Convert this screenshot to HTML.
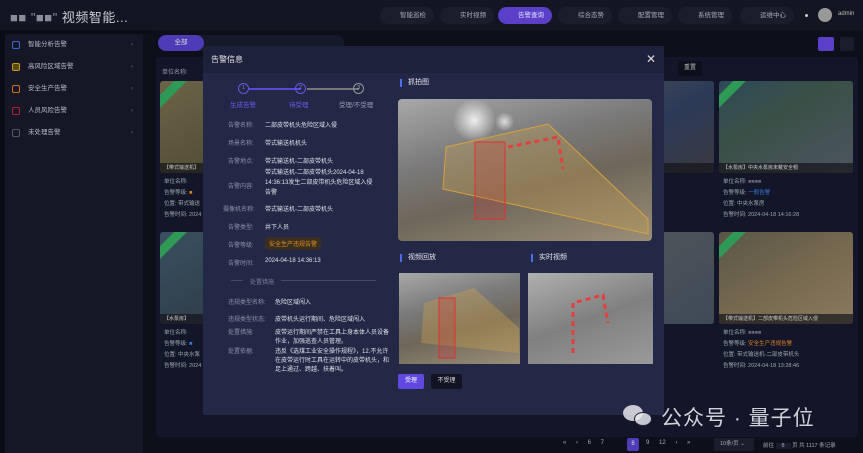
<!DOCTYPE html>
<html><head><meta charset="utf-8"><style>
*{margin:0;padding:0;box-sizing:border-box}
body{width:863px;height:453px;overflow:hidden;background:#0b0d16;font-family:"Liberation Sans","Noto Sans CJK SC",sans-serif;color:#c8cbd8;position:relative;font-size:7px}
.abs{position:absolute}
.top{left:0;top:0;width:863px;height:30px;background:#131522}
.title{left:10px;top:7px;font-size:13px;color:#c9cbd6;letter-spacing:0.5px}
.nav{top:7px;height:17px;border-radius:9px;background:#1a1d2c;font-size:6.5px;color:#aab;line-height:17px;padding-left:20px}
.nav.act{background:#5a3fc8;color:#e6e0ff}
.side{left:5px;top:34px;width:140px;height:419px;background:#151726}
.mi{left:12px;width:125px;height:16px;font-size:6.5px;color:#b8bbc8;line-height:16px;padding-left:16px}
.mi i{position:absolute;left:0;top:4px;width:8px;height:8px;border:1px solid;border-radius:2px}
.mi b{position:absolute;right:4px;top:0;font-weight:normal;color:#667}
.card{width:134px;height:160px}
.img{width:134px;height:92px;border-radius:3px;overflow:hidden;position:relative}
.cap{position:absolute;left:0;bottom:0;width:100%;height:10px;background:rgba(20,20,25,.7);font-size:5px;color:#ccc;line-height:10px;padding-left:4px}
.tag{position:absolute;left:-12px;top:6px;width:44px;height:9px;background:#2e9a55;transform:rotate(-45deg)}
.ln{font-size:5.5px;color:#9aa;height:11px;padding-left:4px}
.modal{left:203px;top:46px;width:461px;height:369px;background:#232847;border-radius:2px}
.mh{left:0;top:0;width:461px;height:27px;background:#1d2139;font-size:8px;color:#e8e8f0;line-height:27px;padding-left:8px}
.row{left:25px;font-size:6px;color:#8d91a8;width:160px}
.row span{color:#e0e2ec;position:absolute;left:37px}
.sec{font-size:7px;color:#e6e6f0;padding-left:6px;border-left:2px solid #4a6cf0;line-height:8px}
.cam{background:linear-gradient(165deg,#a8a8a8 0%,#7a7a7a 35%,#6e675a 60%,#9a8e76 100%);border-radius:4px;overflow:hidden}
.btn{height:15px;font-size:6px;line-height:15px;text-align:center;border-radius:2px}
</style></head><body>
<div class="abs top"></div>
<div class="abs title"><span style="color:#8a8c99">■■ "■■"</span> 视频智能...</div>
<div class="abs nav" style="left:380px;width:54px">智能巡检</div>
<div class="abs nav" style="left:440px;width:54px">实时视频</div>
<div class="abs nav act" style="left:498px;width:54px">告警查询</div>
<div class="abs nav" style="left:558px;width:54px">综合态势</div>
<div class="abs nav" style="left:618px;width:54px">配置管理</div>
<div class="abs nav" style="left:678px;width:54px">系统管理</div>
<div class="abs nav" style="left:740px;width:54px">运维中心</div>
<div class="abs" style="left:805px;top:14px;width:3px;height:3px;border-radius:50%;background:#ccc"></div>
<div class="abs" style="left:818px;top:8px;width:14px;height:14px;border-radius:50%;background:#999"></div>
<div class="abs" style="left:838px;top:11px;font-size:6px;color:#bbb">admin</div>

<div class="abs side"></div>
<div class="abs mi" style="top:37px;"><i style="border-color:#3a6ad0"></i>智能分析告警<b>›</b></div>
<div class="abs mi" style="top:59px;"><i style="border-color:#c9a21c;background:#5a4a10"></i>高风险区域告警<b>›</b></div>
<div class="abs mi" style="top:81px;"><i style="border-color:#d0701c"></i>安全生产告警<b>›</b></div>
<div class="abs mi" style="top:103px;"><i style="border-color:#b02030"></i>人员风险告警<b>›</b></div>
<div class="abs mi" style="top:125px;"><i style="border-color:#556"></i>未处理告警<b>›</b></div>
<div class="abs" style="left:143px;top:34px;width:12px;height:419px;background:#0e1019"></div>
<div class="abs" style="left:154px;top:30px;width:709px;height:423px;background:#0d0f1b"></div>

<div class="abs" style="left:158px;top:35px;width:186px;height:16px;background:#161929;border-radius:8px"></div>
<div class="abs" style="left:158px;top:35px;width:46px;height:16px;background:#4e3bb8;border-radius:8px;font-size:6.5px;text-align:center;line-height:16px;color:#ddd">全部</div>
<div class="abs" style="left:818px;top:37px;width:16px;height:14px;background:#5a3fc8;border-radius:2px"></div>
<div class="abs" style="left:840px;top:37px;width:14px;height:14px;background:#1a1d2c;border-radius:2px"></div>
<div class="abs" style="left:156px;top:57px;width:702px;height:380px;background:#131628;border-radius:4px"></div>
<div class="abs" style="left:162px;top:67px;font-size:6px;color:#99a">单位名称:</div>
<div class="abs btn" style="left:678px;top:61px;width:24px;background:#0d0f1b;color:#bbb">重置</div>

<div class="abs card" style="left:160px;top:81px"><div class="img" style="background:linear-gradient(150deg,#6b6448,#4a432e)"><div class="tag"></div><div class="cap">【带式输送机】</div></div><div class="ln" style="margin-top:4px">单位名称:</div><div class="ln">告警等级: <span style="color:#e08020">■</span></div><div class="ln">位置: 带式输送</div><div class="ln">告警时间: 2024</div></div>
<div class="abs card" style="left:160px;top:232px"><div class="img" style="background:linear-gradient(150deg,#3a5060,#2a3540)"><div class="tag"></div><div class="cap">【水泵房】</div></div><div class="ln" style="margin-top:4px">单位名称:</div><div class="ln">告警等级: <span style="color:#3a7ae0">■</span></div><div class="ln">位置: 中央水泵</div><div class="ln">告警时间: 2024</div></div>
<div class="abs card" style="left:580px;top:81px"><div class="img" style="background:linear-gradient(150deg,#4a4e58,#2c3a58 50%,#3a3a40)"><div class="cap">...人员安全帽</div></div></div>
<div class="abs card" style="left:580px;top:232px"><div class="img" style="background:linear-gradient(150deg,#54575c,#3e4a56)"></div></div>
<div class="abs card" style="left:719px;top:81px"><div class="img" style="background:linear-gradient(150deg,#2e4a5a,#3a5046 40%,#4c5560)"><div class="tag"></div><div class="cap">【水泵房】中央水泵房未戴安全帽</div></div><div class="ln" style="margin-top:4px">单位名称: <span style="color:#667">■■■■</span></div><div class="ln">告警等级: <span style="color:#3a7ae0">一般告警</span></div><div class="ln">位置: 中央水泵房</div><div class="ln">告警时间: 2024-04-18 14:16:28</div></div>
<div class="abs card" style="left:719px;top:232px"><div class="img" style="background:linear-gradient(150deg,#5a5648,#7a6c50 60%,#8a7a60)"><div class="tag"></div><div class="cap">【带式输送机】二部皮带机头危险区域入侵</div></div><div class="ln" style="margin-top:4px">单位名称: <span style="color:#667">■■■■</span></div><div class="ln">告警等级: <span style="color:#e08020">安全生产违规告警</span></div><div class="ln">位置: 带式输送机-二部皮带机头</div><div class="ln">告警时间: 2024-04-18 13:28:46</div></div>

<div class="abs" style="left:563px;top:440px;font-size:6px;color:#aab;word-spacing:8px">« ‹ 6 7</div>
<div class="abs" style="left:627px;top:438px;width:12px;height:13px;background:#4e3bb8;border-radius:2px;font-size:6px;text-align:center;line-height:13px;color:#ddd">8</div>
<div class="abs" style="left:646px;top:440px;font-size:6px;color:#aab;word-spacing:8px">9 12 › »</div>
<div class="abs" style="left:714px;top:438px;width:40px;height:13px;background:#1a1d2c;font-size:5.5px;color:#aab;line-height:13px;padding-left:6px">10条/页 ⌄</div>
<div class="abs" style="left:763px;top:441px;font-size:5.5px;color:#aab">前往 <span style="background:#1a1d2c;padding:0 6px">8</span> 页 共 1117 条记录</div>

<div class="abs modal">
 <div class="abs mh">告警信息<span style="position:absolute;right:8px;top:0;font-size:12px;color:#ddd">✕</span></div>
 <div class="abs" style="left:46px;top:42px;width:52px;height:1.5px;background:#5a48d8"></div>
 <div class="abs" style="left:104px;top:42px;width:52px;height:1.5px;background:#777"></div>
 <div class="abs" style="left:35px;top:37px;width:11px;height:11px;border:1.5px solid #6a55e0;border-radius:50%;font-size:5px;text-align:center;line-height:8px;color:#8a7af0">1</div>
 <div class="abs" style="left:92px;top:37px;width:11px;height:11px;border:1.5px solid #6a55e0;border-radius:50%;font-size:5px;text-align:center;line-height:8px;color:#8a7af0">2</div>
 <div class="abs" style="left:150px;top:37px;width:11px;height:11px;border:1.5px solid #999;border-radius:50%;font-size:5px;text-align:center;line-height:8px;color:#bbb">3</div>
 <div class="abs" style="left:27px;top:53px;font-size:6.5px;color:#6a5ae8">生成告警</div>
 <div class="abs" style="left:86px;top:53px;font-size:6.5px;color:#6a5ae8">待受理</div>
 <div class="abs" style="left:136px;top:53px;font-size:6.5px;color:#9a9cb0">受理/不受理</div>
 <div class="abs row" style="top:74px">告警名称: <span>二部皮带机头危险区域入侵</span></div>
 <div class="abs row" style="top:92px">场景名称: <span>带式输送机机头</span></div>
 <div class="abs row" style="top:110px">告警地点: <span>带式输送机-二部皮带机头</span></div>
 <div class="abs row" style="top:126px;line-height:10px"><span style="top:-4px;width:110px">带式输送机-二部皮带机头2024-04-18 14:36:13发生二部皮带机头危险区域入侵告警</span><br>告警内容:</div>
 <div class="abs row" style="top:158px;left:20px">摄像机名称: <span style="left:42px">带式输送机-二部皮带机头</span></div>
 <div class="abs row" style="top:176px">告警类型: <span>井下人员</span></div>
 <div class="abs row" style="top:194px">告警等级: <span style="background:#3a2e22;color:#e0901c;padding:2px 4px;border-radius:3px;top:-3px">安全生产违规告警</span></div>
 <div class="abs row" style="top:212px">告警时间: <span>2024-04-18 14:36:13</span></div>
 <div class="abs" style="left:28px;top:234px;width:12px;height:1px;background:#444a66"></div>
 <div class="abs" style="left:47px;top:231px;font-size:6px;color:#7a7e98">处置措施</div>
 <div class="abs" style="left:78px;top:234px;width:95px;height:1px;background:#444a66"></div>
 <div class="abs row" style="top:251px">违规类型名称: <span style="left:47px">危险区域闯入</span></div>
 <div class="abs row" style="top:268px">违规类型状态: <span style="left:47px">皮带机头运行期间、危险区域闯入</span></div>
 <div class="abs row" style="top:283px;line-height:9px">处置措施: <span style="left:47px;width:115px;top:0">皮带运行期间严禁在工具上身本体人员设备作业，加强巡查人员管理。</span></div>
 <div class="abs row" style="top:302px;line-height:9px">处置依据: <span style="left:47px;width:115px;top:0">违反《选煤工业安全操作规程》，12.不允许在皮带运行时工具在运转中的皮带机头，和足上通过、跨越、扶着叫。</span></div>

 <div class="abs sec" style="left:197px;top:33px">抓拍图</div>
 <div class="abs cam" style="left:195px;top:53px;width:254px;height:142px">
  <div class="abs" style="left:0;top:0;width:100%;height:100%;background:radial-gradient(circle at 30% 15%,#eee 0,transparent 10%),radial-gradient(circle at 42% 16%,#ddd 0,transparent 5%)"></div>
  <svg class="abs" style="left:0;top:0" width="254" height="142"><polygon points="48,48 150,25 250,120 250,135 45,90" fill="rgba(200,160,80,0.35)" stroke="#d8a040" stroke-width="1"/><rect x="77" y="43" width="30" height="77" fill="rgba(200,60,60,0.25)" stroke="#e03030"/><path d="M110,48 L160,38 L165,70" stroke="#e04040" stroke-width="3" fill="none" stroke-dasharray="5,4"/></svg>
 </div>
 <div class="abs sec" style="left:197px;top:208px">视频回放</div>
 <div class="abs sec" style="left:328px;top:208px">实时视频</div>
 <div class="abs cam" style="left:196px;top:227px;width:121px;height:91px;border-radius:0">
  <svg class="abs" style="left:0;top:0" width="121" height="91"><polygon points="25,30 75,15 120,55 120,80 22,70" fill="rgba(200,160,80,0.4)"/><rect x="40" y="25" width="16" height="60" fill="rgba(200,60,60,0.3)" stroke="#e03030"/></svg>
 </div>
 <div class="abs cam" style="left:325px;top:227px;width:125px;height:91px;border-radius:0;background:linear-gradient(160deg,#b0b0b0,#808080 50%,#9a9a9a)">
  <svg class="abs" style="left:0;top:0" width="125" height="91"><path d="M45,80 L45,30 L75,22 L80,50" stroke="#e04040" stroke-width="3" fill="none" stroke-dasharray="5,4"/></svg>
 </div>
 <div class="abs btn" style="left:195px;top:328px;width:26px;background:#6048e0;color:#fff">受理</div>
 <div class="abs btn" style="left:228px;top:328px;width:31px;background:#121424;color:#ddd">不受理</div>
</div>

<div class="abs" style="left:623px;top:405px;width:20px;height:16px;border-radius:50%;background:rgba(230,230,235,0.85)"></div>
<div class="abs" style="left:634px;top:412px;width:18px;height:14px;border-radius:50%;background:rgba(230,230,235,0.85);border:1px solid #20243a"></div>
<div class="abs" style="left:661px;top:402px;font-size:21px;color:rgba(235,235,240,0.88);letter-spacing:1px">公众号 · 量子位</div>
</body></html>
